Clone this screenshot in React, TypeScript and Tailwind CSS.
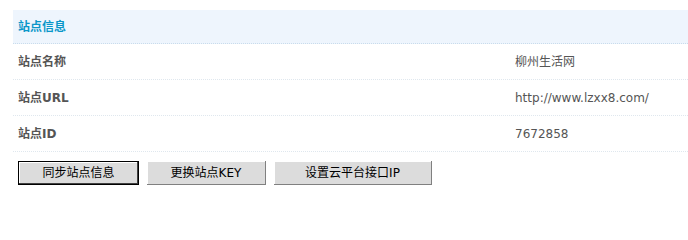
const rows = [
  { label: '站点名称', value: '柳州生活网' },
  { label: '站点URL', value: 'http://www.lzxx8.com/' },
  { label: '站点ID', value: '7672858' },
];

const font = 'font-["DejaVu_Sans","Noto_Sans_CJK_SC",sans-serif]';

export default function App() {
  return (
    <div className={`w-[688px] h-[209px] bg-white pl-[13px] pt-[10px] text-[12px] ${font}`}>
      <div className="h-[34px] bg-[#eef5fd] border-b border-dotted border-[#c9dcec] flex items-center pl-[5px]">
        <span className="font-bold text-[#0a97c9]">站点信息</span>
      </div>
      {rows.map((row) => (
        <div
          key={row.label}
          className="h-[36px] border-b border-dotted border-[#dfe7ee] flex items-center"
        >
          <div className="w-[502px] pl-[5px] font-bold text-[#555555]">{row.label}</div>
          <div className="text-[#555555]">{row.value}</div>
        </div>
      ))}
      <div className="flex gap-[8px] pl-[5px] pt-[9px]">
        <button className="w-[121px] h-[24px] bg-[#dcdcdc] border border-black shadow-[inset_-1px_-1px_0_#404040,inset_1px_1px_0_#ffffff] text-black text-[12px]">
          同步站点信息
        </button>
        <button className="w-[119px] h-[24px] bg-[#dcdcdc] border-r border-b border-[#808080] shadow-[inset_1px_1px_0_#ffffff] text-black text-[12px]">
          更换站点KEY
        </button>
        <button className="w-[158px] h-[24px] bg-[#dcdcdc] border-r border-b border-[#808080] shadow-[inset_1px_1px_0_#ffffff] text-black text-[12px]">
          设置云平台接口IP
        </button>
      </div>
    </div>
  );
}
